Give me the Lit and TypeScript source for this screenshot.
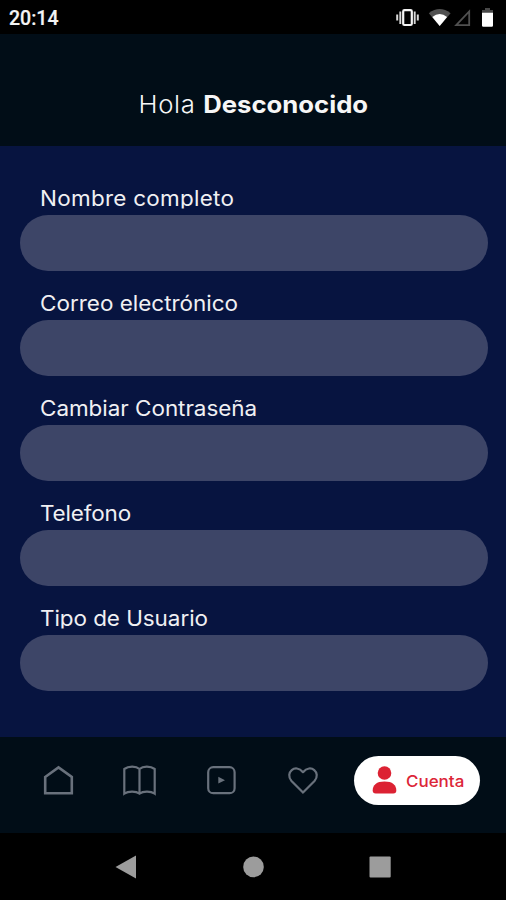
import { LitElement, html, css } from "lit";
import { customElement } from "lit/decorators.js";

interface Field {
  label: string;
  tracking: number;
}

const FIELDS: Field[] = [
  { label: "Nombre completo", tracking: 0.25 },
  { label: "Correo electrónico", tracking: 0 },
  { label: "Cambiar Contraseña", tracking: -0.03 },
  { label: "Telefono", tracking: -0.15 },
  { label: "Tipo de Usuario", tracking: -0.06 },
];

@customElement("status-bar")
class StatusBar extends LitElement {
  static styles = css`
    :host {
      display: flex;
      height: 34px;
      background: #000;
      color: #f4f4f4;
      justify-content: space-between;
      font: 500 19.5px/37px Roboto, sans-serif;
    }
    .time {
      padding-left: 9px;
      -webkit-text-stroke: 0.2px #f4f4f4;
    }
    svg {
      display: block;
      width: 126px;
      height: 34px;
    }
  `;

  render() {
    return html`
      <span class="time">20:14</span>
      <svg viewBox="380 0 126 34" fill="none">
        <rect x="403.2" y="10.2" width="8.6" height="14.8" rx="1.3" stroke="#f4f4f4" stroke-width="2.2" />
        <path d="M400.3 11.5v12.5M414.7 11.5v12.5" stroke="#d8d8d8" stroke-width="1.9" />
        <path d="M397.2 14.5v6M417.8 14.5v6" stroke="#d8d8d8" stroke-width="2" />
        <path d="M428.8 13.2Q439.7 4.8 450.6 13.2L439.7 26Z" fill="#505050" />
        <path d="M432.3 17Q439.7 11 447.1 17L439.7 26Z" fill="#fff" />
        <path d="M469.2 11.4V25.1H456.2Z" stroke="#505050" stroke-width="1.8" />
        <path d="M485 8h5v2h3v3.4h-11v-3.4h3z" fill="#484848" />
        <path d="M482 12.8h11V25.5a1.2 1.2 0 0 1-1.2 1.2h-8.6a1.2 1.2 0 0 1-1.2-1.2z" fill="#fff" />
      </svg>
    `;
  }
}

@customElement("profile-field")
class ProfileField extends LitElement {
  static properties = { label: {}, tracking: { type: Number } };
  declare label: string;
  declare tracking: number;

  static styles = css`
    :host {
      display: block;
    }
    .label {
      height: 31.5px;
      padding-left: 19.5px;
      white-space: nowrap;
      color: #f0f0f3;
      font: 400 21px/31px Inter, sans-serif;
    }
    .text {
      display: inline-block;
      transform: scaleX(1.07);
      transform-origin: left;
      clip-path: inset(0 -4px 5.5px);
    }
    .box {
      height: 56.5px;
      border-radius: 29px;
      background: #3d4567;
    }
  `;

  render() {
    return html`
      <div class="label"><span class="text" style="letter-spacing:${this.tracking}px">${this.label}</span></div>
      <div class="box"></div>
    `;
  }
}

@customElement("tab-bar")
class TabBar extends LitElement {
  static styles = css`
    :host {
      display: flex;
      align-items: center;
      box-sizing: border-box;
      height: 96px;
      padding: 0 26px 10px 17px;
      background: #010d17;
      font-family: Inter, sans-serif;
    }
    .tab {
      display: flex;
      justify-content: center;
      width: 81.6px;
    }
    .icon {
      width: 36px;
      height: 36px;
      fill: none;
      stroke: #69717c;
      stroke-width: 2.2;
    }
    .play {
      fill: #69717c;
      stroke: none;
    }
    .active {
      display: flex;
      align-items: center;
      box-sizing: border-box;
      width: 126px;
      height: 49px;
      margin-left: auto;
      padding-left: 18px;
      gap: 9px;
      border-radius: 25px;
      background: #fff;
      color: #dc2638;
      font-size: 16px;
      font-weight: 500;
    }
    .active span {
      padding-top: 1px;
      transform: scaleX(1.06);
      transform-origin: left;
    }
    .person {
      width: 25px;
      height: 28px;
      fill: #dc2233;
    }
  `;

  render() {
    return html`
      <div class="tab">
        <svg class="icon" viewBox="0 0 36 36"><path d="M5.2 15 18.5 5.4 31.8 15V31.3H5.2Z" stroke-width="2.6" /></svg>
      </div>
      <div class="tab">
        <svg class="icon" viewBox="0 0 36 36">
          <path d="M18.5 7C15 3.9 7.5 3.9 3.3 7V31.7C7.5 28.8 15 29 18.5 31.7C22 29 29.5 28.8 33.7 31.7V7C29.5 3.9 22 3.9 18.5 7ZV31.5" />
        </svg>
      </div>
      <div class="tab">
        <svg class="icon" viewBox="0 0 36 36">
          <rect x="5.2" y="5.2" width="26.4" height="26" rx="5" />
          <path class="play" d="M15.3 14.8 22 18.2 15.3 21.6Z" />
        </svg>
      </div>
      <div class="tab">
        <svg class="icon" viewBox="0 0 36 36">
          <path d="M18 30.6 6.5 19C-.5 10.9 10.3.8 18 10.2C25.7.8 36.5 10.9 29.5 19Z" stroke-linejoin="round" />
        </svg>
      </div>
      <div class="active">
        <svg class="person" viewBox="0 0 25 28">
          <circle cx="12.5" cy="7" r="6.8" />
          <path d="M.7 24.5C.7 18.7 4.6 15.4 12.5 15.4S24.3 18.7 24.3 24.5Q24.3 27.5 21.3 27.5H3.7Q.7 27.5 .7 24.5Z" />
        </svg>
        <span>Cuenta</span>
      </div>
    `;
  }
}

@customElement("system-bar")
class SystemBar extends LitElement {
  static styles = css`
    :host {
      display: flex;
      align-items: center;
      justify-content: space-between;
      box-sizing: border-box;
      height: 67px;
      padding: 0 115px 0 114px;
      background: #000;
    }
    svg {
      width: 24px;
      height: 24px;
      fill: #9c9c9c;
    }
  `;

  render() {
    return html`
      <svg viewBox="0 0 24 24"><path d="M1.5 11.9 22 .4V23.6Z" /></svg>
      <svg viewBox="0 0 24 24"><circle cx="12.5" cy="11.9" r="10.3" /></svg>
      <svg viewBox="0 0 24 24"><rect x="2.5" y="1.4" width="21.2" height="21.2" rx="1" /></svg>
    `;
  }
}

@customElement("app-root")
class AppRoot extends LitElement {
  static styles = css`
    :host {
      display: flex;
      flex-direction: column;
      width: 506px;
      height: 900px;
      overflow: hidden;
      background: #071440;
    }
    .head {
      height: 112px;
      box-sizing: border-box;
      padding-top: 55px;
      background: #010d17;
      color: #f6f6f6;
      text-align: center;
      white-space: nowrap;
      font: 300 24px/32px Inter, sans-serif;
    }
    .title {
      display: inline-block;
      letter-spacing: 0.6px;
      transform: scaleX(1.07);
    }
    .name {
      font-weight: 700;
      letter-spacing: 0;
    }
    .fields {
      display: flex;
      flex: 1;
      flex-direction: column;
      box-sizing: border-box;
      gap: 17px;
      padding: 37px 18.5px 0 20px;
    }
  `;

  render() {
    return html`
      <status-bar></status-bar>
      <header class="head"><span class="title">Hola <span class="name">Desconocido</span></span></header>
      <main class="fields">
        ${FIELDS.map((f) => html`<profile-field .label=${f.label} .tracking=${f.tracking}></profile-field>`)}
      </main>
      <tab-bar></tab-bar>
      <system-bar></system-bar>
    `;
  }
}
